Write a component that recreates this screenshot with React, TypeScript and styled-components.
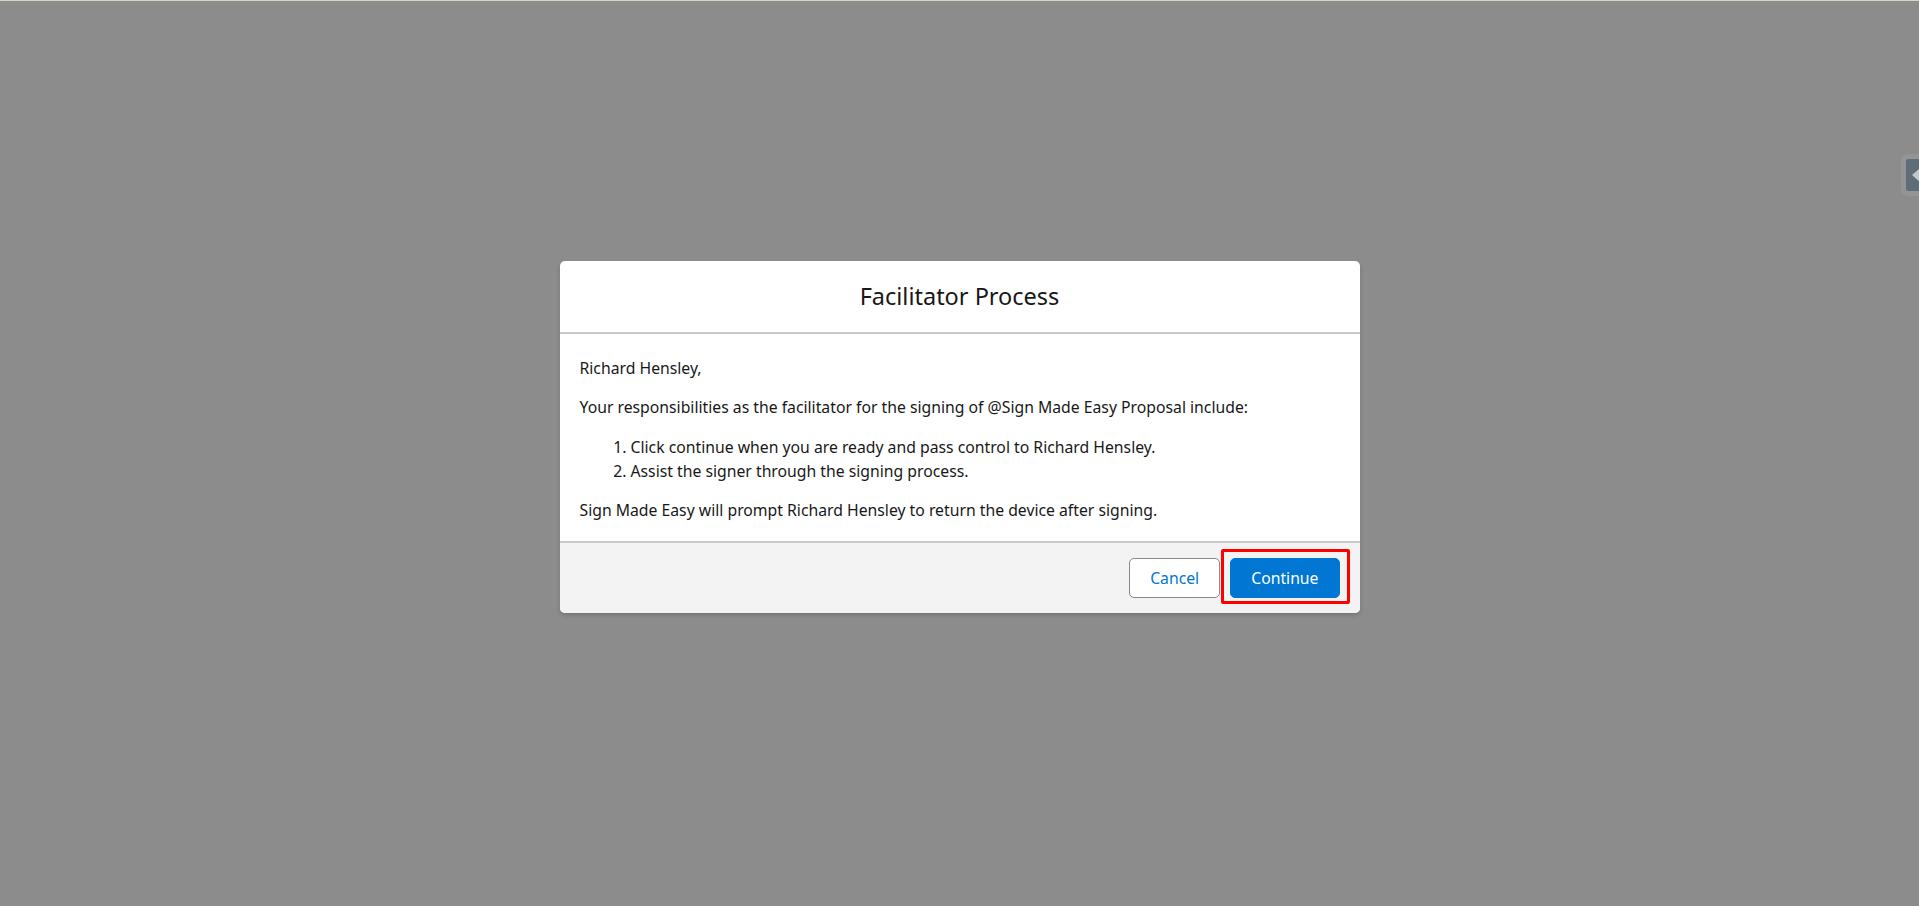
import styled, { createGlobalStyle } from 'styled-components';

const GlobalStyle = createGlobalStyle`
  html, body {
    margin: 0;
    padding: 0;
    height: 100%;
  }
  body {
    font-family: 'Noto Sans', 'Open Sans', sans-serif;
    background: #8c8c8c;
  }
`;

const Page = styled.div`
  position: relative;
  height: 906px;
  overflow: hidden;
  background: #8c8c8c;
  border-top: 1px solid #ddd3c4;
  box-sizing: border-box;
  padding-top: 260px;
`;

const SideTab = styled.div`
  position: absolute;
  top: 153px;
  right: -10px;
  width: 28px;
  height: 42px;
  padding: 5px;
  box-sizing: border-box;
  border-radius: 7px;
  background: #959595;
  display: flex;
`;

const SideTabInner = styled.div`
  flex: 1;
  background: #5e6e79;
  border-radius: 2px;
  display: flex;
  align-items: center;
  padding-left: 6px;
`;

const Arrow = styled.span`
  width: 0;
  height: 0;
  border-top: 7px solid transparent;
  border-bottom: 7px solid transparent;
  border-right: 8px solid #c3c8cb;
`;

const Modal = styled.section`
  width: 800px;
  margin: 0 auto;
  background: #fff;
  border-radius: 5px;
  overflow: hidden;
  color: #181818;
  box-shadow: 0 2px 4px rgba(0, 0, 0, 0.16);
`;

const Header = styled.header`
  padding: 20px;
  text-align: center;
  border-bottom: 2px solid #c9c9c9;
`;

const Title = styled.h2`
  margin: 0;
  font-size: 23.5px;
  font-weight: 400;
  line-height: 31px;
`;

const Content = styled.div`
  padding: 22px 20px 19px;
  font-size: 15.75px;
  line-height: 24.3px;
`;

const Paragraph = styled.p`
  margin: 0 0 15px;
  &:last-child {
    margin-bottom: 0;
  }
`;

const Steps = styled.ol`
  margin: 0 0 15px;
  padding-left: 51px;
`;

const Footer = styled.footer`
  display: flex;
  justify-content: flex-end;
  gap: 10px;
  padding: 15px 20px;
  background: #f3f3f3;
  border-top: 2px solid #c9c9c9;
`;

const Button = styled.button<{ $primary?: boolean }>`
  height: 40px;
  padding: 0 20px;
  border-radius: 5px;
  font-family: inherit;
  font-size: 15.75px;
  line-height: 38px;
  cursor: pointer;
  border: 1px solid ${(props) => (props.$primary ? '#0176d3' : '#8a8a8a')};
  background: ${(props) => (props.$primary ? '#0176d3' : '#fff')};
  color: ${(props) => (props.$primary ? '#fff' : '#0176d3')};
`;

const Highlight = styled.span`
  position: relative;
  display: inline-flex;
`;

const HighlightBox = styled.span`
  position: absolute;
  top: -9px;
  left: -9px;
  right: -10px;
  bottom: -6px;
  border: 3px solid #ff0000;
  border-radius: 2px;
  pointer-events: none;
`;

const App = () => {
  const signer = 'Richard Hensley';

  return (
    <>
      <GlobalStyle />
      <Page>
        <SideTab>
          <SideTabInner>
            <Arrow />
          </SideTabInner>
        </SideTab>
        <Modal>
          <Header>
            <Title>Facilitator Process</Title>
          </Header>
          <Content>
            <Paragraph>{signer},</Paragraph>
            <Paragraph>
              Your responsibilities as the facilitator for the signing of @Sign Made Easy Proposal include:
            </Paragraph>
            <Steps>
              <li>Click continue when you are ready and pass control to {signer}.</li>
              <li>Assist the signer through the signing process.</li>
            </Steps>
            <Paragraph>Sign Made Easy will prompt {signer} to return the device after signing.</Paragraph>
          </Content>
          <Footer>
            <Button>Cancel</Button>
            <Highlight>
              <Button $primary>Continue</Button>
              <HighlightBox />
            </Highlight>
          </Footer>
        </Modal>
      </Page>
    </>
  );
};

export default App;
